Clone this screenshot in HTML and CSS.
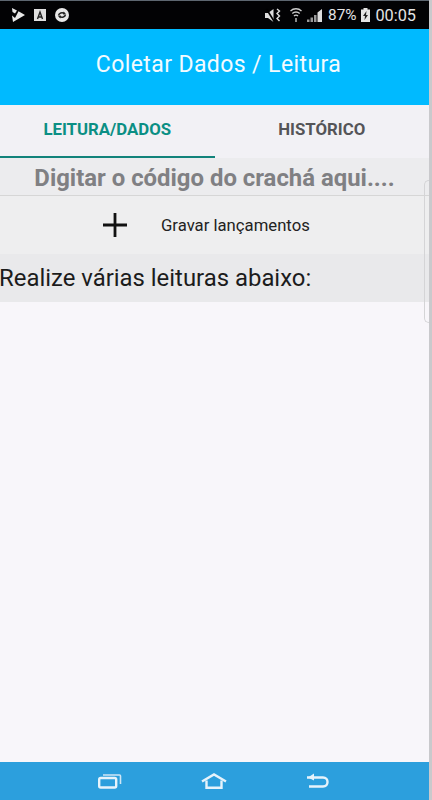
FILE: index.html
```html
<!DOCTYPE html>
<html lang="pt-BR">
<head>
<meta charset="UTF-8">
<meta name="viewport" content="width=device-width, initial-scale=1.0">
<title>Coletar Dados / Leitura</title>
<link rel="stylesheet" href="styles.css">
</head>
<body>
<div class="phone">
    <div class="screen">
        <div class="status-bar">
            <div class="status-left">
                <svg width="13" height="14" viewBox="0 0 13 14"><path d="M0 0l5 2.500L3 5.500 0.500 4zM6.500 3.200L13 7 1 14l-1-6.500 3 2.500z" fill="#e8e8e8"/></svg>
                <svg width="12" height="12" viewBox="0 0 12 12"><rect width="12" height="12" fill="#e0e0e0"/><path d="M3.500 10L6 3l2.500 7M4.500 8h3" fill="none" stroke="#222" stroke-width="1.400"/></svg>
                <svg width="14" height="14" viewBox="0 0 14 14"><circle cx="7" cy="7" r="7" fill="#e8e8e8"/><path d="M3.500 7.500C4 5 7 4 9.500 5.500M10.500 6.500C10 9 7 10 4.500 8.500" fill="none" stroke="#222" stroke-width="1.500"/><path d="M8.500 3.500l2.500 2.500-3 .5zM5.500 10.500L3 8l3-.5z" fill="#222"/></svg>
            </div>
            <div class="status-right">
                <svg class="mute" width="17" height="15" viewBox="0 0 17 15"><path d="M0 5h3L8.500 1v13L3 10H0z" fill="#ddd"/><path d="M1.500 1l8 13" stroke="#000" stroke-width="1.600"/><path d="M12 1l2.500 2-2.500 2.500 2.500 2.500-2.500 2.500 2.500 2.500" fill="none" stroke="#ddd" stroke-width="1.400"/></svg>
                <svg class="wifi" width="12" height="16" viewBox="0 0 12 16"><path d="M0.500 4c3-3 8-3 11 0M2.300 6.500c2-2 5.400-2 7.400 0M4 9c1-1 3-1 4 0" fill="none" stroke="#ccc" stroke-width="1.300"/><path d="M5 11h2v4H5z" fill="#888"/></svg>
                <svg class="signal" width="15" height="13" viewBox="0 0 15 13"><path d="M0 13V10.500h2.500V13zM3.500 13V8.500H6V13zM7 13V6h2.500v7z" fill="#999"/><path d="M10.500 13V3.500L15 0v13z" fill="#ddd"/></svg>
                <span class="battery-pct">87%</span>
                <svg class="battery" width="9" height="14" viewBox="0 0 9 14"><path d="M2.500 0h4v1.500H9V14H0V1.500h2.500z" fill="#e4e4e4"/><path d="M5.500 3L2 8h2l-.5 4L7 7H5z" fill="#222"/></svg>
                <span class="clock">00:05</span>
            </div>
        </div>

        <header class="app-header">Coletar Dados / Leitura</header>

        <nav class="tabs">
            <div class="tab tab-active">LEITURA/DADOS</div>
            <div class="tab">HISTÓRICO</div>
        </nav>

        <div class="code-input">Digitar o código do crachá aqui....</div>

        <div class="save-row">
            <svg class="plus" width="24" height="24" viewBox="0 0 24 24"><path d="M0 12h24M12 0v24" stroke="#111" stroke-width="2.800"/></svg>
            <span class="save-label">Gravar lançamentos</span>
        </div>

        <div class="reads-label"><span class="reads-text">Realize várias leituras abaixo:</span></div>

        <main class="reads-list"></main>

        <div class="nav-bar">
            <svg width="24" height="16" viewBox="0 0 24 16"><rect x="1.200" y="5" width="17" height="9.500" rx="1.500" fill="none" stroke="#e6f3fb" stroke-width="2.400"/><path d="M5 2h16.500a1 1 0 0 1 1 1v8" fill="none" stroke="#cfe6f5" stroke-width="1.600"/></svg>
            <svg width="26" height="16" viewBox="0 0 26 16"><path d="M1 8.500L13 1.500l12 7" fill="none" stroke="#e6f3fb" stroke-width="2.400"/><path d="M5.500 7.500V14.800h15V7.500" fill="none" stroke="#e6f3fb" stroke-width="2.400"/></svg>
            <svg width="24" height="16" viewBox="0 0 24 16"><path d="M1 4.500h16c6 0 6 9 0 9H3" fill="none" stroke="#e6f3fb" stroke-width="2.400"/><path d="M8 .500L2 4.500l6 3z" fill="#e6f3fb"/></svg>
        </div>

        <div class="side-handle"></div>
    </div>
</div>
</body>
</html>
```

FILE: styles.css
```css
body {
    margin: 0;
    font-family: Roboto, "Liberation Sans", sans-serif;
    background-color: #c9c9cc;
}

.phone {
    height: 800px;
    padding-right: 3px;
}

.screen {
    position: relative;
    display: flex;
    flex-direction: column;
    height: 800px;
    background-color: #f8f6fa;
}

.status-bar {
    display: flex;
    justify-content: space-between;
    align-items: center;
    height: 28px;
    border-top: 1px solid #5d6670;
    background-color: #020204;
    color: #e4e4e4;
}

.status-left {
    display: flex;
    align-items: center;
    gap: 9px;
    padding-left: 12px;
}

.status-right {
    display: flex;
    align-items: center;
    gap: 5px;
    padding-right: 13px;
}

.wifi {
    margin-left: 3px;
}

.battery-pct {
    margin-left: 1px;
    font-size: 15.300px;
}

.clock {
    font-size: 16.300px;
}

.app-header {
    display: flex;
    align-items: center;
    justify-content: center;
    height: 76px;
    padding: 0 0 6px 8px;
    box-sizing: border-box;
    background-color: #00baff;
    color: #f2fbff;
    font-size: 23px;
    letter-spacing: 0.4px;
}

.tabs {
    display: flex;
    height: 53px;
    background-color: #f2f1f5;
}

.tab {
    flex: 1;
    display: flex;
    align-items: center;
    justify-content: center;
    box-sizing: border-box;
    padding-bottom: 5px;
    color: #555558;
    font-size: 16.800px;
    font-weight: 700;
}

.tab-active {
    border-bottom: 2px solid #12837b;
    padding-bottom: 3px;
    color: #0b8f84;
}

.code-input {
    display: flex;
    align-items: center;
    justify-content: center;
    height: 38px;
    padding-top: 2px;
    box-sizing: border-box;
    border-bottom: 1px solid #d6d6d6;
    background-color: #ececee;
    color: #808083;
    font-size: 23.900px;
    font-weight: 700;
    white-space: nowrap;
}

.save-row {
    display: flex;
    align-items: center;
    height: 58px;
    padding-left: 103px;
    box-sizing: border-box;
    background-color: #eeeeef;
}

.plus {
    flex-shrink: 0;
}

.save-label {
    margin-left: 34px;
    color: #222;
    font-size: 16.700px;
}

.reads-label {
    display: flex;
    align-items: center;
    height: 48px;
    background-color: #e9e9eb;
    color: #1c1c1c;
    font-size: 23.900px;
    white-space: nowrap;
}

.reads-text {
    margin-left: -1px;
}

.reads-list {
    flex: 1;
}

.nav-bar {
    display: flex;
    align-items: center;
    gap: 79px;
    height: 38px;
    padding-left: 98px;
    box-sizing: border-box;
    background-color: #2c9fdd;
}

/* puxador lateral por cima do conteudo */
.side-handle {
    position: absolute;
    top: 180px;
    right: 0;
    width: 4px;
    height: 141px;
    border: 1px solid #d4d4d6;
    border-right: none;
    border-radius: 5px 0 0 5px;
}
```
